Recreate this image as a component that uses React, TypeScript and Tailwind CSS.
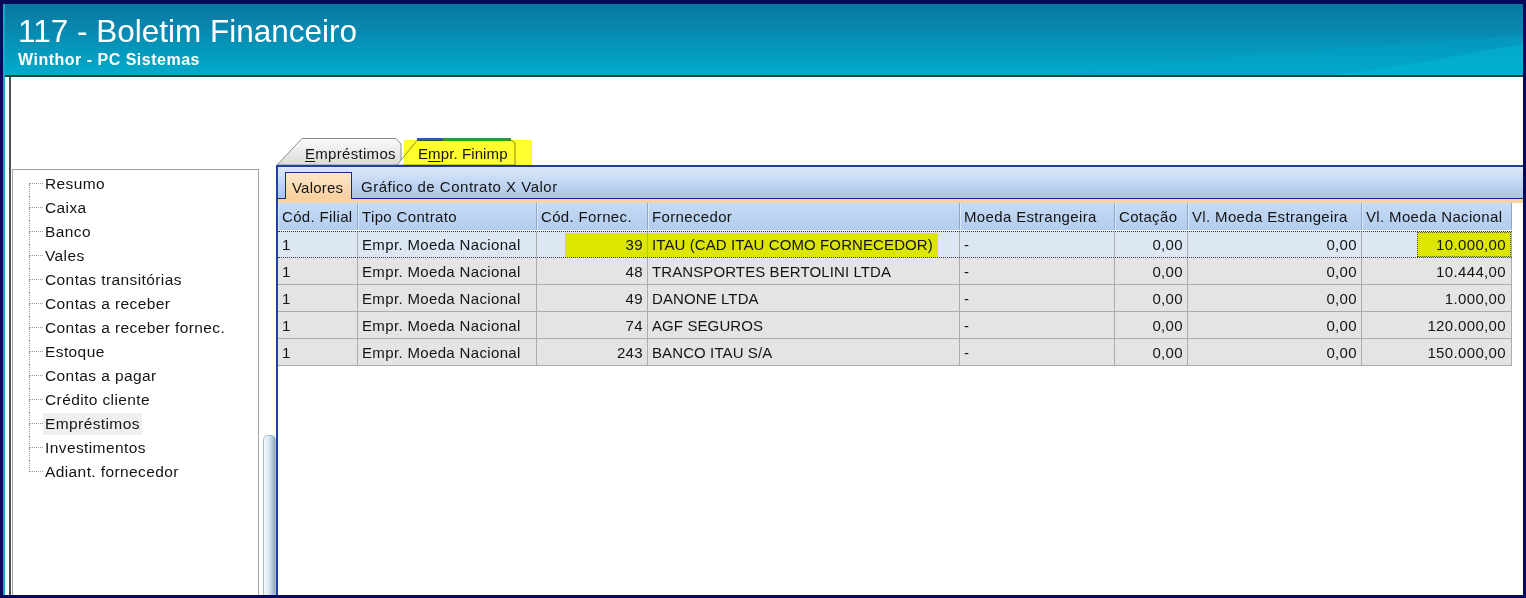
import React from 'react';

const treeItems = [
  'Resumo',
  'Caixa',
  'Banco',
  'Vales',
  'Contas transitórias',
  'Contas a receber',
  'Contas a receber fornec.',
  'Estoque',
  'Contas a pagar',
  'Crédito cliente',
  'Empréstimos',
  'Investimentos',
  'Adiant. fornecedor',
];

const rows = [
  { f: '1', t: 'Empr. Moeda Nacional', c: '39', n: 'ITAU (CAD ITAU COMO FORNECEDOR)', m: '-', cot: '0,00', vme: '0,00', vmn: '10.000,00' },
  { f: '1', t: 'Empr. Moeda Nacional', c: '48', n: 'TRANSPORTES BERTOLINI LTDA', m: '-', cot: '0,00', vme: '0,00', vmn: '10.444,00' },
  { f: '1', t: 'Empr. Moeda Nacional', c: '49', n: 'DANONE LTDA', m: '-', cot: '0,00', vme: '0,00', vmn: '1.000,00' },
  { f: '1', t: 'Empr. Moeda Nacional', c: '74', n: 'AGF SEGUROS', m: '-', cot: '0,00', vme: '0,00', vmn: '120.000,00' },
  { f: '1', t: 'Empr. Moeda Nacional', c: '243', n: 'BANCO ITAU S/A', m: '-', cot: '0,00', vme: '0,00', vmn: '150.000,00' },
];

const headers = [
  { label: 'Cód. Filial', w: 'w-[80px]' },
  { label: 'Tipo Contrato', w: 'w-[179px]' },
  { label: 'Cód. Fornec.', w: 'w-[111px]' },
  { label: 'Fornecedor', w: 'w-[312px]' },
  { label: 'Moeda Estrangeira', w: 'w-[155px]' },
  { label: 'Cotação', w: 'w-[73px]' },
  { label: 'Vl. Moeda Estrangeira', w: 'w-[174px]' },
  { label: 'Vl. Moeda Nacional', w: 'w-[150px]' },
];

function Cell({ w, right, children, pad = true }: { w: string; right?: boolean; children: React.ReactNode; pad?: boolean }) {
  const p = pad ? (right ? 'justify-end pr-[4px]' : 'pl-[4px]') : right ? 'justify-end' : '';
  return (
    <div className={`${w} shrink-0 h-full border-r border-[#acacac] flex items-center whitespace-nowrap overflow-hidden ${p}`}>
      {children}
    </div>
  );
}

function TreeRow({ label, first, last, selected }: { label: string; first: boolean; last: boolean; selected: boolean }) {
  return (
    <div className="h-[24px] flex items-stretch">
      <div className="w-[16px] shrink-0" />
      <div className="w-[14px] shrink-0 flex flex-col">
        <div className={`h-[12px] border-b border-dotted border-[#9a9a9a] ${first ? '' : 'border-l'}`} />
        <div className={`flex-1 border-dotted border-[#9a9a9a] ${last ? '' : 'border-l'}`} />
      </div>
      <div className="flex items-center">
        <span className={`h-[22px] flex items-center px-[2px] ${selected ? 'bg-[#efefef]' : ''}`}>{label}</span>
      </div>
    </div>
  );
}

export default function App() {
  return (
    <div className="w-[1526px] h-[598px] bg-[#08085c] pt-[4px] pl-[3px] pr-[3px] pb-[3px] overflow-hidden font-['Liberation_Sans',Arial,sans-serif] text-[#141414]">
      <div className="h-full flex flex-col border-l-2 border-[#1aa8c6] bg-white">
        {/* Header */}
        <div className="relative h-[71px] shrink-0 overflow-hidden bg-[linear-gradient(180deg,#0a76a0_0%,#078db4_45%,#01abca_100%)]">
          <svg className="absolute inset-0" width="1518" height="71" viewBox="0 0 1518 71" preserveAspectRatio="none">
            <path d="M1250 0 L1518 0 L1518 6 C1450 4 1360 2 1250 0 Z" fill="#0a7aa2" opacity="0.5" />
            <path d="M1330 71 C1400 62 1460 50 1518 40 L1518 71 Z" fill="#02b6d4" opacity="0.6" />
            <path d="M1050 71 C1180 55 1360 40 1518 32 L1518 40 C1460 50 1400 62 1330 71 Z" fill="#02a6cc" opacity="0.35" />
          </svg>
          <div className="relative pl-[13px] pt-[12px] text-white">
            <div className="text-[31.5px] leading-[31px]">117 - Boletim Financeiro</div>
            <div className="mt-[5px] text-[16px] leading-[16px] font-bold tracking-[0.5px]">Winthor - PC Sistemas</div>
          </div>
        </div>
        <div className="h-[2px] shrink-0 bg-[#2e3b3e]" />

        {/* Content */}
        <div className="flex-1 flex min-h-0">
          <div className="w-[4px] shrink-0" />
          <div className="w-[2px] shrink-0 bg-[#4e4e4e]" />
          <div className="w-[1px] shrink-0" />
          {/* Tree panel */}
          <div className="w-[247px] shrink-0 mt-[92px] border border-b-0 border-[#a3a3a3] pt-[2px] text-[15.5px] leading-[16px] tracking-[0.4px]">
            {treeItems.map((t, i) => (
              <TreeRow key={t} label={t} first={i === 0} last={i === treeItems.length - 1} selected={t === 'Empréstimos'} />
            ))}
          </div>
          <div className="w-[4px] shrink-0" />
          {/* Splitter thumb */}
          <div className="w-[13px] shrink-0 flex flex-col">
            <div className="h-[358px] shrink-0" />
            <div className="flex-1 rounded-t-[5px] border border-b-0 border-[#a9bdd2] bg-[linear-gradient(90deg,#f6f9fc_0%,#dbe6f2_45%,#a9c1da_80%,#8eabc8_100%)]" />
          </div>

          {/* Right column */}
          <div className="flex-1 min-w-0 flex flex-col pt-[60px]">
            {/* Tabs */}
            <div className="relative h-[28px] shrink-0">
              <svg className="absolute left-0 top-0" width="260" height="28" viewBox="0 0 260 28">
                <defs>
                  <linearGradient id="tabg" x1="0" y1="0" x2="0" y2="1">
                    <stop offset="0" stopColor="#fbfbfb" />
                    <stop offset="1" stopColor="#dadada" />
                  </linearGradient>
                </defs>
                <polygon points="1,28 26,1.5 120,1.5 125,7 125,28" fill="url(#tabg)" stroke="#8c8c8c" strokeWidth="1" />
                <polygon points="121,28 141,3.5 236,3.5 239,6 239,28" fill="#ffffff" stroke="#8c8c8c" strokeWidth="1" />
                <line x1="141" y1="2.5" x2="167" y2="2.5" stroke="#2a56c8" strokeWidth="3" />
                <line x1="167" y1="2.5" x2="235" y2="2.5" stroke="#2e9a3a" strokeWidth="3" />
              </svg>
              <div className="absolute left-[128px] top-[3px] w-[128px] h-[26px] bg-[#ffff2e] mix-blend-multiply" />
              <div className="relative flex pl-[29px] pt-[9px] text-[15px] leading-[15px]">
                <span className="w-[113px] shrink-0 tracking-[0.3px]">
                  <span className="underline underline-offset-2">E</span>mpréstimos
                </span>
                <span className="tracking-[0.1px]">
                  E<span className="underline underline-offset-2">m</span>pr. Finimp
                </span>
              </div>
            </div>

            {/* Tab page */}
            <div className="flex-1 min-h-0 flex flex-col border-t-2 border-l-2 border-[#22409e] text-[15px] leading-[15px] tracking-[0.35px]">
              {/* Inner strip */}
              <div className="h-[32px] shrink-0 flex bg-[linear-gradient(180deg,#dde8f8_0%,#c2d6f2_50%,#a9c3ea_100%)]">
                <div className="w-[7px] shrink-0 border-b border-[#1a2a7a]" />
                <div className="w-[67px] shrink-0 self-end h-[27px] border border-b-0 border-[#1a2a7a] bg-[linear-gradient(180deg,#fde7c8_0%,#f9cf9e_100%)] pl-[6px] pt-[7px] tracking-[0.2px]">
                  Valores
                </div>
                <div className="flex-1 border-b border-[#1a2a7a] pl-[9px] pt-[12px] whitespace-nowrap tracking-[0.5px]">Gráfico de Contrato X Valor</div>
              </div>
              <div className="h-[4px] shrink-0 bg-[#f7d3a6]" />

              {/* Grid */}
              <div className="w-[1234px]">
                <div className="h-[28px] flex border-b border-[#eef4fc] bg-[linear-gradient(180deg,#c6dbf4_0%,#b2cdef_100%)]">
                  {headers.map((h) => (
                    <div
                      key={h.label}
                      className={`${h.w} shrink-0 h-full border-r border-[#8ea8cc] shadow-[inset_1px_0_0_#dce8f8] flex items-center pl-[4px] whitespace-nowrap overflow-hidden`}
                    >
                      {h.label}
                    </div>
                  ))}
                </div>
                {rows.map((r, i) => {
                  const sel = i === 0;
                  return (
                    <div
                      key={i}
                      className={`h-[27px] flex ${sel ? 'bg-[#dde7f4] border-y border-dotted border-[#3c3c3c]' : 'bg-[#e4e4e4] border-b border-[#acacac]'}`}
                    >
                      <Cell w="w-[80px]">{r.f}</Cell>
                      <Cell w="w-[179px]">{r.t}</Cell>
                      {sel ? (
                        <Cell w="w-[111px]" right pad={false}>
                          <span className="w-[82px] h-[24px] bg-[#dce600] flex items-center justify-end pr-[4px]">{r.c}</span>
                        </Cell>
                      ) : (
                        <Cell w="w-[111px]" right>{r.c}</Cell>
                      )}
                      {sel ? (
                        <Cell w="w-[312px]" pad={false}>
                          <span className="h-[24px] bg-[#dce600] flex items-center pl-[4px] pr-[5px] tracking-[0.1px]">{r.n}</span>
                        </Cell>
                      ) : (
                        <Cell w="w-[312px]">
                          <span className="tracking-[0.1px]">{r.n}</span>
                        </Cell>
                      )}
                      <Cell w="w-[155px]">{r.m}</Cell>
                      <Cell w="w-[73px]" right>{r.cot}</Cell>
                      <Cell w="w-[174px]" right>{r.vme}</Cell>
                      {sel ? (
                        <Cell w="w-[150px]" right pad={false}>
                          <span className="w-[94px] h-full bg-[#dce600] border border-dotted border-[#5a5a00] flex items-center justify-end pr-[4px]">{r.vmn}</span>
                        </Cell>
                      ) : (
                        <Cell w="w-[150px]" right>
                          <span className="pr-[1px]">{r.vmn}</span>
                        </Cell>
                      )}
                    </div>
                  );
                })}
              </div>
            </div>
          </div>
        </div>
      </div>
    </div>
  );
}
